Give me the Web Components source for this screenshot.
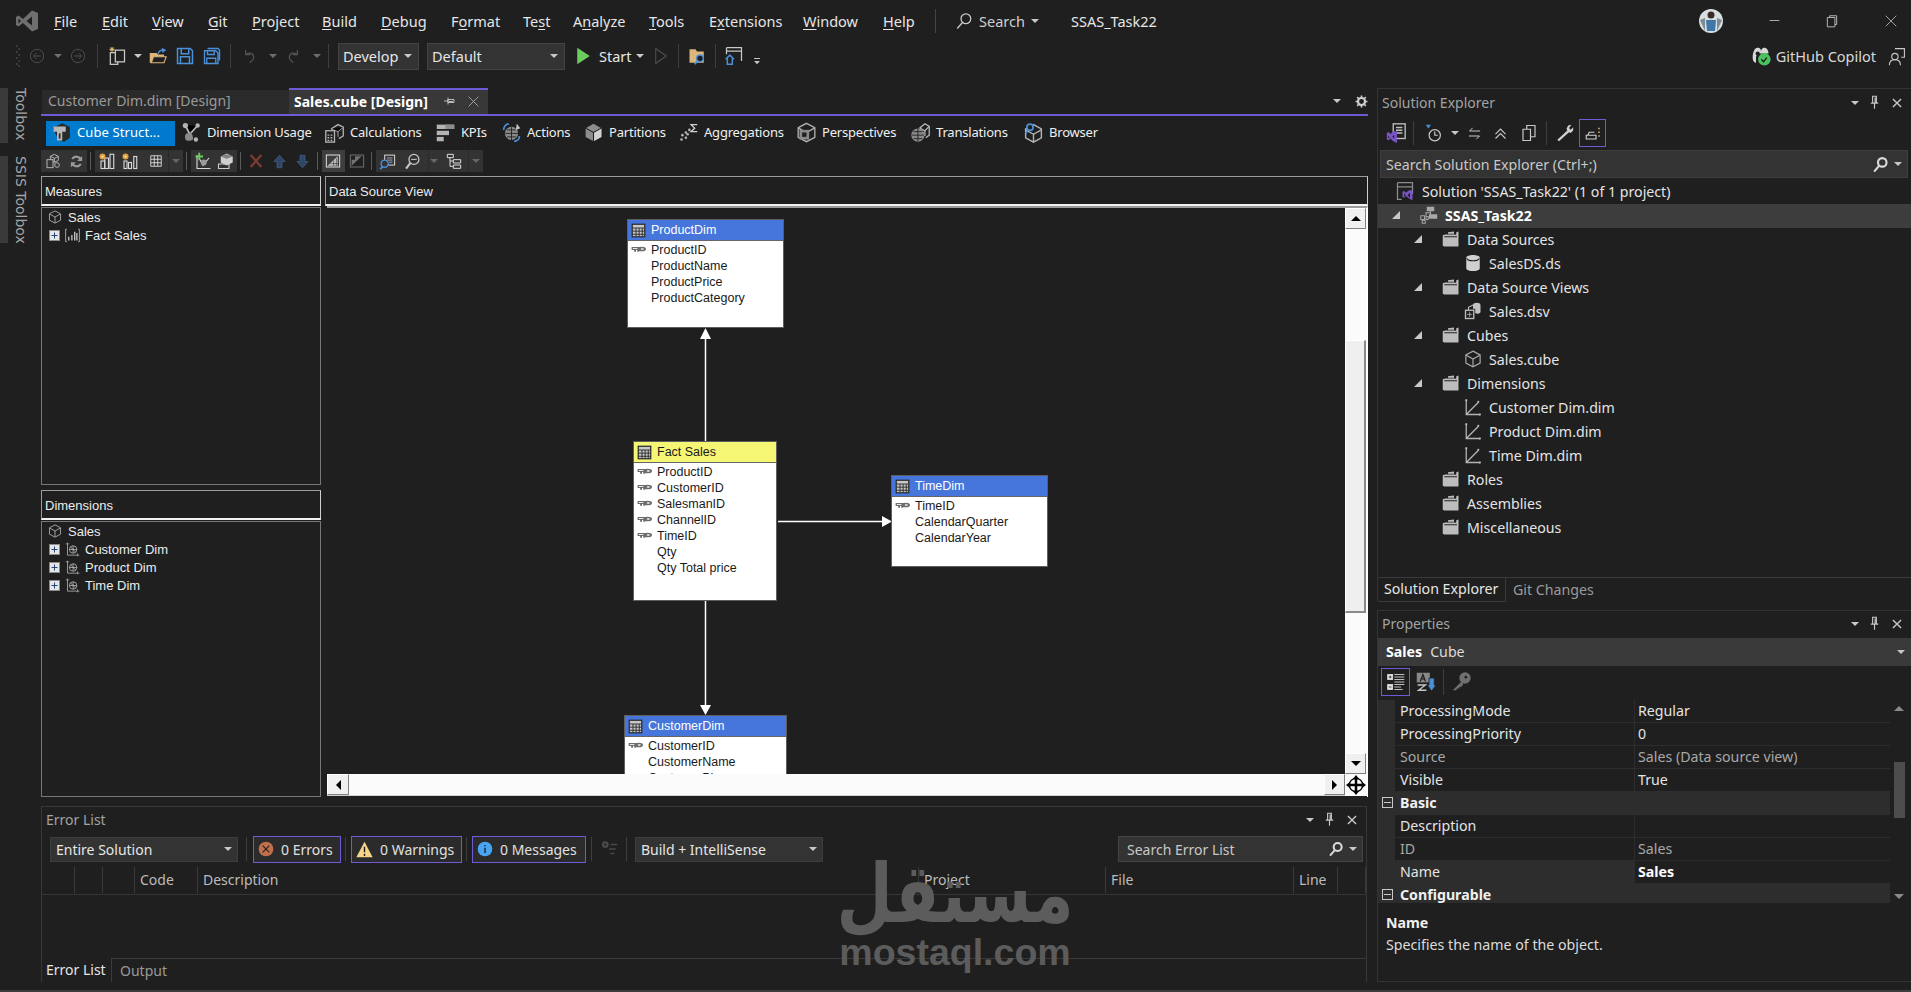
<!DOCTYPE html>
<html>
<head>
<meta charset="utf-8">
<title>SSAS_Task22</title>
<style>
html,body{margin:0;padding:0;background:#1f1f1f;width:1911px;height:992px;overflow:hidden}
</style>
</head>
<body>
<vs-app>
  <vs-titlebar slot="title"></vs-titlebar>
  <vs-mainbar slot="bar"></vs-mainbar>
  <side-strip slot="side"></side-strip>
  <doc-well slot="doc"></doc-well>
  <error-list slot="err"></error-list>
  <solution-pane slot="sol"></solution-pane>
  <props-pane slot="props"></props-pane>
  <water-mark slot="mark"></water-mark>
</vs-app>

<script>
// icons, all hand drawn on a 24 box
const G='#b4b4b4', D='#5e5e5e', B='#4a90d9';
const ICONS={
 vslogo:`<path fill="#6f6f6f" fill-rule="evenodd" d="M17 1.500 23 4v16l-6 2.500-9-8.500-4.500 3.500L1 16V8l2.500-1.500L8 10zM17 7.500 11.500 12l5.500 4.500zM3.500 9.500v5L6 12z"/>`,
 grip:`<g fill="#4c4c4c"><rect x="9" y="1" width="2" height="2"/><rect x="13" y="4" width="2" height="2"/><rect x="9" y="7" width="2" height="2"/><rect x="13" y="10" width="2" height="2"/><rect x="9" y="13" width="2" height="2"/><rect x="13" y="16" width="2" height="2"/><rect x="9" y="19" width="2" height="2"/><rect x="13" y="21" width="2" height="2"/></g>`,
 back:`<g fill="none" stroke="#4e4e4e" stroke-width="1.500"><circle cx="12" cy="12" r="10"/><path d="M18 12H7M11 7.500 6.500 12l4.500 4.500"/></g>`,
 fwd:`<g fill="none" stroke="#4e4e4e" stroke-width="1.500"><circle cx="12" cy="12" r="10"/><path d="M6 12h11M13 7.500l4.500 4.500-4.500 4.500"/></g>`,
 newproj:`<g fill="none" stroke="#c8c8c8" stroke-width="1.500"><rect x="4" y="8" width="9" height="14"/><rect x="10" y="5" width="11" height="14" fill="#1f1f1f"/></g><path d="M6 1v6M3 4h6M4 2l4 4M8 2 4 6" stroke="#e8c877" stroke-width="1.200"/>`,
 open:`<path fill="#dcb67a" d="M1 8h9l2 2h8v3H6l-3 8H1z"/><path fill="#1f1f1f" stroke="#dcb67a" stroke-width="1.500" d="M6 13h17l-3 8H3z"/><path d="M12 9c1-3 4-5 7-5" fill="none" stroke="#4a90d9" stroke-width="2"/><path fill="#4a90d9" d="M17 1l6 3-5 4z"/>`,
 save:`<path fill="none" stroke="#4a90d9" stroke-width="2" d="M2 2h17l3 3v17H2zM7 2v7h10V2M6 22v-9h12v9"/>`,
 saveall:`<path fill="none" stroke="#4a90d9" stroke-width="1.800" d="M2 5h15l3 3v14H2zM6 5v5h9V5M5 22v-7h12v7M6 2h14l2 2v14"/>`,
 undo:`<path fill="none" stroke="#555" stroke-width="1.800" d="M7 3v7h7M7 10c4-4 11-3 12 3 .5 4-3 7-6 9"/>`,
 redo:`<path fill="none" stroke="#555" stroke-width="1.800" d="M17 3v7h-7M17 10C13 6 6 7 5 13c-.5 4 3 7 6 9"/>`,
 play:`<path fill="#6ccb5f" d="M2 1l20 11L2 23z"/>`,
 playo:`<path fill="none" stroke="#555" stroke-width="1.500" d="M3 2l18 10-18 10z"/>`,
 foldersearch:`<path fill="#dcb67a" d="M2 3h8l2 3h9v15H2z"/><circle cx="16" cy="15" r="4.500" fill="#1f1f1f" stroke="#4a90d9" stroke-width="2"/><path d="M12.500 18.500 9 23" stroke="#4a90d9" stroke-width="2.500"/>`,
 winhome:`<path fill="none" stroke="#c8c8c8" stroke-width="1.500" d="M3 2h18v16M3 2v8M3 6h18"/><path fill="none" stroke="#4a90d9" stroke-width="1.800" d="M2 16l5-5 5 5M4 15v7h6v-7"/>`,
 overflow:`<path d="M5 6h14" stroke="#c8c8c8" stroke-width="2.500"/><path fill="#c8c8c8" d="M5 12h14l-7 8z"/>`,
 search:`<g fill="none" stroke="#c8c8c8" stroke-width="1.700"><circle cx="14.500" cy="9" r="6.500"/><path d="M10 14 3 22"/></g>`,
 searchb:`<g fill="none" stroke="#dcdcdc" stroke-width="3"><circle cx="14.500" cy="9" r="6"/><path d="M10 14 3 22"/></g>`,
 copilot:`<path fill="#d8d8d8" d="M2 14c0-6 2-12 6-12s4 3 4 5c0-2 1-5 4-5s5 3 5 7H9c-1 0-3 2-3 5v6c-2 0-4-2-4-6z"/><circle cx="8" cy="9" r="2.500" fill="#1f1f1f"/><circle cx="16" cy="16" r="7.500" fill="#4bc25f"/><path d="M12.500 16l2.500 3 4-5" fill="none" stroke="#111" stroke-width="1.500"/>`,
 person:`<g fill="none" stroke="#c8c8c8" stroke-width="1.400"><circle cx="10" cy="12" r="4"/><path d="M3 23c0-5 3-7 7-7s7 2 7 7M10 2h12v11h-4"/></g>`,
 avatar:`<circle cx="12" cy="12" r="12" fill="#d8dde0"/><circle cx="12" cy="6" r="3.500" fill="#3a2c24"/><path fill="#3f78a8" d="M7 11h10l-1 11H8z"/><path fill="#7d8b93" d="M1 11l5-2v13zM23 11l-5-2v13z"/>`,
 pin:`<path fill="none" stroke="#c8c8c8" stroke-width="1.800" d="M9 2h6v11H9zM6 13h12M12 13v9M13 4v8"/>`,
 pinside:`<path fill="none" stroke="#c8c8c8" stroke-width="1.800" d="M22 9v6H10V9zM10 5v14M10 12H2M12 13h8"/>`,
 x:`<path d="M5 5l14 14M19 5 5 19" stroke="#c8c8c8" stroke-width="2.400" fill="none"/>`,
 xthin:`<path d="M3 3l18 18M21 3 3 21" stroke="#c8c8c8" stroke-width="1.300" fill="none"/>`,
 min:`<path d="M3 12h18" stroke="#c8c8c8" stroke-width="1.500"/>`,
 restore:`<path d="M8 6V3h12v15h-3M4 6h13v16H4z" stroke="#c8c8c8" stroke-width="1.500" fill="none"/>`,
 gear:`<circle cx="12" cy="12" r="6.500" fill="none" stroke="#d0d0d0" stroke-width="4"/><path d="M12 1v4M12 19v4M1 12h4M19 12h4M4 4l3 3M17 17l3 3M20 4l-3 3M7 17l-3 3" stroke="#d0d0d0" stroke-width="3"/>`,
 cube:`<g fill="none" stroke="#a8a8a8" stroke-width="1.600"><path d="M12 1.500l9.500 5v11l-9.500 5-9.500-5v-11z"/><path d="M3 7l9 5 9-5M12 12v10"/></g>`,
 cstruct:`<path fill="#2a2a2a" stroke="#222" d="M4 7l10-5 8 4v12l-6 4-6-2z"/><path fill="#b8b8b8" d="M4 5h14v6h-4v10H8V11H4z"/><path fill="#2a2a2a" d="M10 13h2v6h-2z"/>`,
 dimusage:`<g stroke="${G}" stroke-width="2"><path d="M5 4l5 10 9-10M10 14l3 6"/></g><circle cx="5" cy="4" r="3" fill="${G}"/><circle cx="19" cy="4" r="2.500" fill="${G}"/><circle cx="9" cy="17" r="4.500" fill="#8a8a8a"/><circle cx="17" cy="20" r="2.500" fill="${G}"/>`,
 calc:`<path fill="none" stroke="${G}" stroke-width="1.500" d="M8 8l8-5 6 3v10l-5 3"/><path stroke="${G}" d="M8 8l8 3 6-5M16 11v6"/><rect x="2" y="10" width="10" height="13" fill="#1f1f1f" stroke="${G}" stroke-width="1.500"/><path stroke="${G}" stroke-width="1.500" stroke-dasharray="2 1.500" d="M4 15h6M4 18h6M4 21h6"/>`,
 kpi:`<g fill="${G}"><rect x="2" y="3" width="20" height="5"/><rect x="2" y="10" width="14" height="5"/><rect x="2" y="17" width="8" height="5"/></g><rect x="12" y="3" width="10" height="5" fill="#8c8c8c"/>`,
 actions:`<circle cx="12" cy="13" r="7.500" fill="#8a8a8a"/><path d="M12 6v15M5 13h15M7 9h10M7 17h10" stroke="#1f1f1f"/><path d="M3 9c0-4 3-7 6-7M21 16c0 4-3 6-6 6" fill="none" stroke="${B}" stroke-width="2"/><path d="M18 2l4 5-5 2z" fill="#c8c8c8"/>`,
 partitions:`<path fill="#8e8e8e" d="M12 2l9 5v10l-9 5-9-5V7z"/><path fill="#d2d2d2" d="M12 12l9-5v10l-9 5z"/><path d="M3 7l9 5 9-5M12 12v10" fill="none" stroke="#1f1f1f" stroke-width="1.200"/>`,
 aggs:`<g fill="${G}"><circle cx="4" cy="20" r="1.500"/><circle cx="5" cy="15" r="1.500"/><circle cx="9" cy="18" r="1.500"/><circle cx="9" cy="12" r="1.500"/><circle cx="13" cy="9" r="1.500"/><circle cx="11" cy="14" r="1.500"/></g><path d="M22 3h-7l4 4-4 4h7" fill="none" stroke="#d0d0d0" stroke-width="1.600"/>`,
 persp:`<g fill="none" stroke="${G}" stroke-width="1.500"><path d="M12 1.500l9.500 5v11l-9.500 5-9.500-5v-11z"/><path d="M3 7l9 5 9-5"/></g><rect x="4" y="9" width="11" height="11" fill="#8a8a8a"/><rect x="7" y="12" width="5" height="5" fill="#1f1f1f"/>`,
 trans:`<g fill="none" stroke="${G}" stroke-width="1.500"><path d="M11 7l6-5 5 3v10l-4 3"/><path d="M11 7l6 3 5-5M17 10v6"/></g><circle cx="9" cy="15" r="7.500" fill="#8a8a8a"/><path d="M9 8v14M2 15h14M4 11h10M4 19h10" stroke="#1f1f1f"/>`,
 browser:`<g fill="none" stroke="${G}" stroke-width="1.600"><path d="M12 3l9 5v10l-9 5-9-5V8z"/><path d="M3 9l9 5 9-5M12 14v9"/></g><circle cx="8" cy="6" r="3.500" fill="#1f1f1f" stroke="${B}" stroke-width="2"/><path d="M6 9l-3 4" stroke="${B}" stroke-width="2"/>`,
 t_addm:`<g fill="none" stroke="${G}" stroke-width="1.500"><path d="M8 5l6-3 6 3v6l-6 3-6-3z"/><path d="M8 5l6 3 6-3M14 8v6"/></g><rect x="3" y="10" width="9" height="12" fill="#333" stroke="${G}" stroke-width="1.500"/><circle cx="18" cy="18" r="3.500" fill="none" stroke="${G}" stroke-width="1.500"/>`,
 t_ref:`<path fill="none" stroke="#9a9a9a" stroke-width="3.500" d="M19 9A8 8 0 0 0 5 8M5 15a8 8 0 0 0 14 1"/><path fill="#9a9a9a" d="M21 3v8h-8zM3 21v-8h8z"/>`,
 t_bars:`<g fill="none" stroke="#d8d8d8" stroke-width="1.500"><rect x="4" y="12" width="5" height="10"/><rect x="9" y="8" width="5" height="14"/><rect x="16" y="3" width="5" height="19"/></g><circle cx="6" cy="6" r="4" fill="#e0a040"/><circle cx="6" cy="6" r="1.500" fill="#f3e3b0"/>`,
 t_bars2:`<g fill="none" stroke="#d8d8d8" stroke-width="1.500"><rect x="4" y="12" width="4" height="10"/><rect x="10" y="14" width="4" height="8"/><rect x="17" y="6" width="4" height="16"/></g><circle cx="6" cy="6" r="4" fill="#e0a040"/><circle cx="6" cy="6" r="1.500" fill="#f3e3b0"/>`,
 t_grid:`<path fill="none" stroke="#e0e0e0" stroke-width="1.500" d="M3 3h18v18H3zM9 3v18M15 3v18M3 9h18M3 15h18"/>`,
 t_addd:`<path fill="none" stroke="#d8d8d8" stroke-width="1.500" d="M4 4v18h18M8 10l4 8 8-10"/><path d="M7 1v10M2 6h10" stroke="#6ccb5f" stroke-width="2.500"/><circle cx="13" cy="14" r="4" fill="#9a9a9a"/>`,
 t_cubeedit:`<path fill="#d0d0d0" d="M13 2l8 4v8l-8 4-8-4V6z"/><path fill="#333" d="M13 9l8-3-8-3-8 3z" opacity=".5"/><path fill="none" stroke="#d0d0d0" stroke-width="1.500" d="M2 16h14v6H2z"/>`,
 t_x:`<path d="M4 3l16 18M20 3 4 21" stroke="#7c3a32" stroke-width="3.500"/>`,
 t_up:`<path fill="#2f4566" stroke="#466893" d="M12 2l9 10h-5v10H8V12H3z"/>`,
 t_dn:`<path fill="#2f4566" stroke="#466893" d="M12 22l9-10h-5V2H8v10H3z"/>`,
 t_split:`<rect x="2" y="3" width="20" height="18" fill="none" stroke="#e0e0e0" stroke-width="1.500"/><path d="M4 19 19 5v14z" fill="#e0e0e0" opacity=".85"/><path d="M8 16h12M13 11v8M17 8v11" stroke="#333"/>`,
 t_split2:`<rect x="2" y="3" width="20" height="18" fill="none" stroke="#707070" stroke-width="1.500"/><path d="M4 19 19 5H9v5H4z" fill="#707070"/>`,
 t_find:`<rect x="8" y="3" width="14" height="14" fill="#333" stroke="#d0d0d0" stroke-width="1.500"/><path d="M11 7h8M11 10h8M14 13h5" stroke="#d0d0d0"/><circle cx="8" cy="15" r="5" fill="#333" stroke="${B}" stroke-width="2"/><path d="M5 19l-3 4" stroke="${B}" stroke-width="2.500"/>`,
 t_zoom:`<circle cx="14" cy="9" r="7" fill="#333" stroke="#c8c8c8" stroke-width="1.800"/><path d="M10 9h8" stroke="#c8c8c8" stroke-width="1.500"/><path d="M9 14l-6 8" stroke="#c8c8c8" stroke-width="3"/>`,
 t_tree:`<path fill="none" stroke="#dcdcdc" stroke-width="1.500" d="M2 2h9v5H2zM11 10h11v5H11zM11 18h11v5H11zM6 7v13h5M6 12h5"/>`,
 folder:`<path fill="#bdbdbd" d="M1 7l3-1h15V3l3-1v20H3l-2-1z"/><path fill="none" stroke="#1f1f1f" stroke-width="1.300" d="M3 9h17M9 3h9v3"/><path fill="#bdbdbd" d="M8 3l8-1v3H8z" />`,
 db:`<path fill="#d0d0d0" d="M3 5c0-5 18-5 18 0v14c0 5-18 5-18 0z"/><path fill="none" stroke="#1f1f1f" stroke-width="1.400" d="M3.500 6c2 4 15 4 17 0"/>`,
 dsv:`<path fill="#c4c4c4" d="M12 4c0-4 10-4 10 0v9c0 3-5 3-7 2V9h-3z"/><rect x="2" y="11" width="11" height="11" fill="#1f1f1f" stroke="#bdbdbd" stroke-width="1.800"/><path d="M7.500 13v7M4 16.500h7" stroke="#bdbdbd"/><path fill="none" stroke="#bdbdbd" stroke-width="1.500" d="M6 11V7l6-3"/>`,
 dim:`<g fill="none" stroke="#b4b4b4" stroke-width="1.700"><path d="M3 2v20h19M3 22 19 6"/></g><circle cx="3" cy="3" r="1.500" fill="#b4b4b4"/><circle cx="21" cy="22" r="1.500" fill="#b4b4b4"/><circle cx="19" cy="5" r="1.500" fill="#b4b4b4"/>`,
 project:`<g fill="#a8a8a8"><rect x="9" y="1" width="10" height="6"/><rect x="12" y="11" width="11" height="6"/></g><path d="M14 7v6M14 9h-6v4" stroke="#a8a8a8" stroke-width="1.500" fill="none"/><g fill="none" stroke="#a8a8a8" stroke-width="1.300"><rect x="1" y="13" width="5" height="5"/><rect x="3" y="19" width="4" height="4"/><rect x="8" y="14" width="3" height="4"/></g>`,
 solution:`<path fill="none" stroke="#8c8c8c" stroke-width="1.500" d="M3 2h18v14M3 2v20h5M3 7h18"/><path fill="#7a55c7" d="M21 11v12l-4-2-4-3-2 2-2-1v-6l2-1 2 2 4-3z"/><path fill="#1f1f1f" d="M18 14l-3 3 3 3zM11 15v4l2-2z"/>`,
 vsproj:`<rect x="9" y="2" width="13" height="16" fill="none" stroke="#bdbdbd" stroke-width="1.500"/><path d="M12 6h7M12 9h7M12 12h7" stroke="#bdbdbd" stroke-width="1.500"/><path fill="#7a55c7" d="M13 10v13l-4-2-3-3-2 2-2-1V12l2-1 2 2 3-3z"/><path fill="#1f1f1f" d="M10 14l-2 2 2 2zM3.500 15v3l1.500-1.500z"/>`,
 history:`<circle cx="13" cy="15" r="7.500" fill="none" stroke="#c8c8c8" stroke-width="1.600"/><path d="M13 10v5h4" fill="none" stroke="#c8c8c8" stroke-width="1.600"/><path fill="#4a90d9" d="M1 1h7L4.500 6z"/>`,
 sync:`<path fill="none" stroke="#c8c8c8" stroke-width="1.600" d="M21 8H4l5-5M3 16h17l-5 5"/>`,
 collapse:`<path fill="none" stroke="#c8c8c8" stroke-width="1.800" d="M4 13l8-8 8 8M4 20l8-8 8 8"/>`,
 copies:`<path fill="none" stroke="#c8c8c8" stroke-width="1.600" d="M4 7h10v15H4zM9 7V2h11v15h-6"/>`,
 wrench:`<path fill="#d0d0d0" d="M21 2l-4 1-2 4 1 2-12 11 2 2L18 11l2 1 3-3 0-4-3 3-2-2z"/>`,
 preview:`<path fill="none" stroke="#d0d0d0" stroke-width="1.500" d="M3 15h13v5H3zM5 15l2-4h7"/><path stroke="#dcb67a" stroke-width="2" stroke-dasharray="2 3" d="M20 5v14"/>`,
 p_cat:`<g fill="none" stroke="#e0e0e0"><rect x="2" y="3" width="6" height="6" fill="#e0e0e0"/><rect x="2" y="15" width="6" height="6" fill="#e0e0e0"/><path d="M10 3h12M10 6h12M10 9h12M10 12h12M10 15h12M10 18h8M10 21h10"/></g><path d="M3.500 6h3M5 4.500v3M3.500 18h3" stroke="#1f1f1f"/>`,
 p_az:`<rect x="2" y="2" width="15" height="11" fill="#888"/><path d="M6 12l3-8 3 8M7 9h4" fill="none" stroke="#1f1f1f" stroke-width="1.400"/><path d="M3 16h9l-8 6h9" fill="none" stroke="#c8c8c8" stroke-width="1.500"/><path d="M16 8h6v8h2l-5 7-5-7h2z" fill="#4a90d9" stroke="#222"/>`,
 p_key:`<circle cx="16" cy="8" r="6.500" fill="#6f6f6f"/><path d="M12 12 2 22v0h4l1-2h2l1-2h2l2-3z" fill="#6f6f6f"/><circle cx="17" cy="7" r="1.500" fill="#1f1f1f"/>`,
 plusbox:`<rect x=".5" y=".5" width="10" height="10" fill="#e6e6e6" stroke="#8a8a8a"/><path d="M2.500 5.500h6M5.500 2.500v6" stroke="#24457a"/>`,
 bars:`<path fill="none" stroke="#c0c0c0" stroke-width="1.300" d="M3 2H1v20h2M21 2h2v20h-2"/><path d="M6 14v6M11 11v9M15.500 6v14M19 8v12" stroke="#c0c0c0" stroke-width="2.200"/>`,
 dimbox:`<g fill="none" stroke="#b4b4b4" stroke-width="1.300"><path d="M4 1v20h19"/><circle cx="13" cy="12" r="6"/><path d="M7 12h12M13 6v12M9 8l8 8"/></g><path d="M1 3h6M20 18v5" stroke="#b4b4b4"/>`,
 tbl:`<rect x="1" y="1" width="22" height="22" fill="#2b2b2b"/><path d="M3 3h18v18H3z" fill="#c8c8c8"/><path d="M3 8h18M3 13h18M3 18h18M8 8v13M13 8v13M18 8v13" stroke="#2b2b2b" stroke-width="1.500"/>`,
 key:`<path d="M1 6h14v9h-2v5h-3v-5H8v5H5v-5H1z" fill="#6e6e6e"/><path d="M3 9.500h11v2.500H3z" fill="#fff"/><circle cx="17" cy="12" r="7" fill="#6e6e6e"/><circle cx="18" cy="12" r="2.500" fill="#fff"/>`,
 err:`<circle cx="12" cy="12" r="11" fill="#c0704a"/><path d="M7 7l10 10M17 7 7 17" stroke="#1f1f1f" stroke-width="1.600"/>`,
 warn:`<path fill="#f7d488" d="M12 1 23.500 23H.5z"/><path d="M12 8v8M12 18v3" stroke="#1f1f1f" stroke-width="2"/>`,
 info:`<circle cx="12" cy="12" r="11" fill="#4aa3f0"/><path d="M12 10v8M12 6v2" stroke="#102030" stroke-width="2"/>`,
 filter:`<circle cx="7" cy="6" r="4.500" fill="#4a4a4a"/><path d="M14 6h9M12 12h9M14 18h5" stroke="#4a4a4a" stroke-width="2"/><circle cx="7" cy="6" r="1.500" fill="#1f1f1f"/>`,
 crosshair:`<path fill="#000" d="M12 0l4 5h-2.500v5.500H19V8l5 4-5 4v-2.500h-5.500V19H16l-4 5-4-5h2.500v-5.500H5V16l-5-4 5-4v2.500h5.500V5H8z"/><circle cx="12" cy="12" r="8" fill="none" stroke="#000" stroke-width="1.500"/>`,
};

class VsIcon extends HTMLElement{
  constructor(){super();this.attachShadow({mode:'open'});}
  connectedCallback(){
    const s=this.getAttribute('s')||18, w=this.getAttribute('w')||s;
    this.shadowRoot.innerHTML=`<style>:host{display:inline-flex;flex:none;width:${w}px;height:${s}px}svg{display:block;width:100%;height:100%}</style>
    <svg viewBox="0 0 24 24" preserveAspectRatio="none">${ICONS[this.getAttribute('n')]||''}</svg>`;
  }
}
customElements.define('vs-icon',VsIcon);

// small triangle used for every dropdown
class VsCaret extends HTMLElement{
  constructor(){
    super();this.attachShadow({mode:'open'});
    this.shadowRoot.innerHTML=`<style>:host{display:inline-block;flex:none;width:0;height:0;border-left:4px solid transparent;border-right:4px solid transparent;border-top:4px solid var(--c,#c8c8c8)}</style>`;
  }
}
customElements.define('vs-caret',VsCaret);

function comp(tag,html){
  const t=document.createElement('template');
  t.innerHTML=html;
  customElements.define(tag,class extends HTMLElement{
    constructor(){super();this.attachShadow({mode:'open'});this.shadowRoot.appendChild(t.content.cloneNode(true));}
  });
}

comp('vs-app',`<style>
:host{display:grid;width:1911px;height:992px;position:relative;overflow:hidden;background:#1f1f1f;color:#dcdcdc;
  font-family:"Noto Sans","Liberation Sans",sans-serif;font-size:14px;
  grid-template-columns:41px 1329px 7px 534px;grid-template-rows:41px 33px 14px 709px 9px 176px 8px 1fr}
::slotted([slot=title]),::slotted([slot=bar]){grid-column:1/-1}
::slotted([slot=title]){grid-row:1}
::slotted([slot=bar]){grid-row:2}
::slotted([slot=side]){grid-column:1;grid-row:4/7}
::slotted([slot=doc]){grid-column:2;grid-row:4}
::slotted([slot=err]){grid-column:2;grid-row:6}
.right{grid-column:4;grid-row:4/7;display:grid;grid-template-rows:513px 9px 372px}
.foot{grid-column:1/-1;grid-row:8;background:#3d3d3d}
</style>
<slot name="title"></slot><slot name="bar"></slot><slot name="side"></slot><slot name="doc"></slot><slot name="err"></slot>
<div class="right"><slot name="sol"></slot><div></div><slot name="props"></slot></div>
<div class="foot"></div>
<slot name="mark"></slot>`);

comp('vs-titlebar',`<style>
:host{display:flex;align-items:center;height:41px;font-size:14.500px;color:#e6e6e6;padding:0 0 0 15px;box-sizing:border-box}
.m{flex:none}
u{text-underline-offset:2px}
.sep{width:1px;height:24px;background:#444;margin:0 15px 0 0}
.s{display:flex;align-items:center;gap:6px;width:116px;margin-left:4px;color:#cfcfcf}
.tt{flex:1}
.w{width:58px;display:flex;justify-content:center}
</style>
<vs-icon n="vslogo" s="24" style="margin-right:15px"></vs-icon>
<span class="m" style="width:48px"><u>F</u>ile</span><span class="m" style="width:50px"><u>E</u>dit</span><span class="m" style="width:56px"><u>V</u>iew</span><span class="m" style="width:44px"><u>G</u>it</span><span class="m" style="width:70px"><u>P</u>roject</span><span class="m" style="width:59px"><u>B</u>uild</span><span class="m" style="width:70px"><u>D</u>ebug</span><span class="m" style="width:72px">F<u>o</u>rmat</span><span class="m" style="width:50px">Te<u>s</u>t</span><span class="m" style="width:76px">A<u>n</u>alyze</span><span class="m" style="width:60px"><u>T</u>ools</span><span class="m" style="width:94px">E<u>x</u>tensions</span><span class="m" style="width:80px"><u>W</u>indow</span><span class="m" style="width:52px"><u>H</u>elp</span>
<span class="sep"></span>
<span class="s"><vs-icon n="search" s="18"></vs-icon>Search<vs-caret></vs-caret></span>
<span class="tt">SSAS_Task22</span>
<vs-icon n="avatar" s="24" style="margin-right:22px"></vs-icon>
<span class="w"><vs-icon n="min" s="13"></vs-icon></span><span class="w"><vs-icon n="restore" s="14"></vs-icon></span><span class="w" style="width:40px;margin-left:10px"><vs-icon n="xthin" s="14"></vs-icon></span>`);

comp('vs-mainbar',`<style>
:host{display:flex;align-items:center;height:33px;padding-bottom:3px;box-sizing:border-box;font-size:14.500px;color:#e6e6e6;--c:#6e6e6e}
.sep{width:1px;height:24px;background:#3e3e3e;flex:none}
.combo{flex:none;box-sizing:border-box;height:27px;display:flex;align-items:center;justify-content:space-between;background:#333;border:1px solid #434343;padding:0 6px 0 4px}
.g{margin-left:auto;display:flex;align-items:center;gap:5px;color:#d8d8d8}
</style>
<vs-icon n="grip" s="24" w="14" style="margin-left:11px"></vs-icon>
<vs-icon n="back" s="16" style="margin-left:4px"></vs-icon><vs-caret style="margin-left:9px"></vs-caret>
<vs-icon n="fwd" s="16" style="margin-left:8px"></vs-icon>
<span class="sep" style="margin-left:11px"></span>
<vs-icon n="newproj" s="20" style="margin-left:9px"></vs-icon><vs-caret style="margin-left:7px;--c:#c8c8c8"></vs-caret>
<vs-icon n="open" s="18" style="margin-left:7px"></vs-icon>
<vs-icon n="save" s="18" style="margin-left:9px"></vs-icon>
<vs-icon n="saveall" s="18" style="margin-left:9px"></vs-icon>
<span class="sep" style="margin-left:9px"></span>
<vs-icon n="undo" s="16" style="margin-left:10px"></vs-icon><vs-caret style="margin-left:12px"></vs-caret>
<vs-icon n="redo" s="16" style="margin-left:9px"></vs-icon><vs-caret style="margin-left:11px"></vs-caret>
<span class="sep" style="margin-left:7px"></span>
<span class="combo" style="width:81px;margin-left:9px">Develop<vs-caret style="--c:#c8c8c8"></vs-caret></span>
<span class="combo" style="width:138px;margin-left:8px">Default<vs-caret style="--c:#c8c8c8"></vs-caret></span>
<vs-icon n="play" s="18" w="15" style="margin-left:11px"></vs-icon>
<span style="margin-left:8px;width:37px">Start</span><vs-caret style="--c:#c8c8c8"></vs-caret>
<vs-icon n="playo" s="18" w="14" style="margin-left:10px"></vs-icon>
<span class="sep" style="margin-left:10px"></span>
<vs-icon n="foldersearch" s="18" style="margin-left:9px"></vs-icon>
<span class="sep" style="margin-left:9px"></span>
<vs-icon n="winhome" s="20" style="margin-left:8px"></vs-icon>
<vs-icon n="overflow" s="10" style="margin-left:8px;margin-top:9px"></vs-icon>
<span class="g"><vs-icon n="copilot" s="20"></vs-icon><span style="margin-right:6px">GitHub Copilot</span><vs-icon n="person" s="19" style="margin-right:5px"></vs-icon></span>`);

comp('side-strip',`<style>
:host{display:flex;flex-direction:column;gap:13px;color:#a6a6a6;font-family:"DejaVu Sans",sans-serif}
span{writing-mode:vertical-rl;border-left:8px solid #3a3a3a;padding-left:5px;width:max-content;font-size:14px}
</style>
<span style="padding-bottom:2px">Toolbox</span><span>SSIS Toolbox</span>`);

comp('doc-well',`<style>
:host{display:grid;grid-template-rows:26px 2px 34px 22px 4px 1fr;min-height:0;width:1327px}
.tabs{display:flex;align-items:stretch}
.t1{width:247px;margin-left:1px;background:#2a2a2a;color:#9a9a9a;padding-left:6px;box-sizing:border-box;margin-top:2px;line-height:22px}
.t2{width:199px;background:#383838;color:#fff;border-top:2px solid #6b5bd6;box-sizing:border-box;display:flex;align-items:center;padding:0 0 2px 5px;font-size:14px;font-weight:700}
.ctl{margin-left:auto;display:flex;align-items:center;gap:14px;padding-right:0}
.line{background:#6b5bd6}
.sub{display:flex;align-items:center;padding-left:5px}
.bar{display:flex;align-items:stretch;height:22px}
.panes{display:grid;grid-template-columns:280px 1043px;gap:4px;min-height:0}
.lft{display:grid;grid-template-rows:309px 307px;gap:5px;min-height:0}
</style>
<div class="tabs">
 <div class="t1">Customer Dim.dim [Design]</div>
 <div class="t2">Sales.cube [Design]<vs-icon n="pinside" s="12" style="margin-left:15px"></vs-icon><vs-icon n="xthin" s="13" style="margin-left:12px"></vs-icon></div>
 <div class="ctl"><vs-caret></vs-caret><vs-icon n="gear" s="13"></vs-icon></div>
</div>
<div class="line"></div>
<div class="sub">
 <cube-tab i="cstruct" w="129" on>Cube Struct...</cube-tab>
 <span style="width:5px"></span>
 <cube-tab i="dimusage" w="143">Dimension Usage</cube-tab>
 <cube-tab i="calc" w="111">Calculations</cube-tab>
 <cube-tab i="kpi" w="66">KPIs</cube-tab>
 <cube-tab i="actions" w="82">Actions</cube-tab>
 <cube-tab i="partitions" w="95">Partitions</cube-tab>
 <cube-tab i="aggs" w="118">Aggregations</cube-tab>
 <cube-tab i="persp" w="114">Perspectives</cube-tab>
 <cube-tab i="trans" w="113">Translations</cube-tab>
 <cube-tab i="browser" w="100">Browser</cube-tab>
</div>
<cube-tools class="bar"></cube-tools>
<div></div>
<div class="panes">
 <div class="lft">
  <list-pane h="Measures">
   <list-row i="cube" top>Sales</list-row>
   <list-row i="bars">Fact Sales</list-row>
  </list-pane>
  <list-pane h="Dimensions">
   <list-row i="cube" top>Sales</list-row>
   <list-row i="dimbox">Customer Dim</list-row>
   <list-row i="dimbox">Product Dim</list-row>
   <list-row i="dimbox">Time Dim</list-row>
  </list-pane>
 </div>
 <dsv-pane></dsv-pane>
</div>`);

class CubeTab extends HTMLElement{
  constructor(){super();this.attachShadow({mode:'open'});}
  connectedCallback(){
    const on=this.hasAttribute('on');
    this.shadowRoot.innerHTML=`<style>
    :host{display:flex;align-items:center;flex:none;box-sizing:border-box;height:25px;padding-bottom:2px;width:${this.getAttribute('w')}px;font-size:13px;letter-spacing:-.2px;color:#f0f0f0;padding-left:${on?4:1}px;gap:${on?6:5}px;${on?'background:#007acc;color:#fff;letter-spacing:.1px;':''}}
    </style><vs-icon n="${this.getAttribute('i')}" s="21"></vs-icon><slot></slot>`;
  }
}
customElements.define('cube-tab',CubeTab);

comp('cube-tools',`<style>
:host{display:flex;align-items:stretch}
.seg{background:#333;display:flex;align-items:center;box-sizing:border-box;flex:none}
.sep{width:1px;height:18px;background:#5a5a5a;align-self:center;flex:none}
.ic{width:23.500px;display:flex;justify-content:center;flex:none}
.dd{width:20px;display:flex;justify-content:center;border-left:1px solid #2a2a2a;align-self:stretch;align-items:center;--c:#666}
</style>
<span class="seg" style="width:46px">
 <span class="ic"><vs-icon n="t_addm" s="16"></vs-icon></span><span class="ic"><vs-icon n="t_ref" s="15"></vs-icon></span>
</span>
<span class="sep" style="margin:0 4px 0 3px"></span>
<span class="seg" style="width:88px">
 <span class="ic"><vs-icon n="t_bars" s="18"></vs-icon></span><span class="ic"><vs-icon n="t_bars2" s="18"></vs-icon></span><span class="ic" style="margin-left:2px"><vs-icon n="t_grid" s="14"></vs-icon></span><span class="dd" style="margin-left:auto"><vs-caret></vs-caret></span>
</span>
<span class="sep" style="margin:0 4px 0 3px"></span>
<span class="seg" style="width:46px">
 <span class="ic"><vs-icon n="t_addd" s="18"></vs-icon></span><span class="ic"><vs-icon n="t_cubeedit" s="18"></vs-icon></span>
</span>
<span class="sep" style="margin:0 3px 0 3px"></span>
<span class="ic" style="align-items:center"><vs-icon n="t_x" s="16"></vs-icon></span><span class="ic" style="align-items:center"><vs-icon n="t_up" s="15"></vs-icon></span><span class="ic" style="align-items:center"><vs-icon n="t_dn" s="15"></vs-icon></span>
<span class="sep" style="margin:0 4px 0 2px"></span>
<span class="seg" style="width:23px;background:#3e3e3e;justify-content:center"><vs-icon n="t_split" s="16"></vs-icon></span>
<span class="ic" style="align-items:center;width:24px"><vs-icon n="t_split2" s="16"></vs-icon></span>
<span class="sep" style="margin:0 4px 0 2px"></span>
<span class="seg" style="width:107px">
 <span class="ic"><vs-icon n="t_find" s="17"></vs-icon></span><span class="ic" style="margin-left:2px"><vs-icon n="t_zoom" s="17"></vs-icon></span><span class="dd" style="width:12px;margin-left:3px"><vs-caret></vs-caret></span><span class="ic" style="width:28px"><vs-icon n="t_tree" s="16"></vs-icon></span><span class="dd" style="width:14px"><vs-caret></vs-caret></span>
</span>`);

class ListPane extends HTMLElement{
  constructor(){super();this.attachShadow({mode:'open'});}
  connectedCallback(){
    this.shadowRoot.innerHTML=`<style>
    :host{display:flex;flex-direction:column;min-height:0;font-family:"Liberation Sans",sans-serif;font-size:13px;color:#ececec;box-sizing:border-box}
    .h{height:30px;flex:none;box-sizing:border-box;border:1px solid #cfcfcf;border-top-color:#9c9c9c;border-left-color:#9c9c9c;border-bottom:2px solid #f2f2f2;padding:2px 0 0 3px;display:flex;align-items:center}
    .b{flex:1;border:1px solid #777;box-sizing:border-box;padding:0 0 0 6px;margin-top:1px}
    </style><div class="h">${this.getAttribute('h')}</div><div class="b"><slot></slot></div>`;
  }
}
customElements.define('list-pane',ListPane);

class ListRow extends HTMLElement{
  constructor(){super();this.attachShadow({mode:'open'});}
  connectedCallback(){
    const top=this.hasAttribute('top');
    this.shadowRoot.innerHTML=`<style>
    :host{display:flex;align-items:center;height:18px;gap:4px}
    .p{width:11px;height:11px;margin-left:1px;margin-right:1px}
    svg{display:block}
    </style>${top?'':'<svg class="p" viewBox="0 0 11 11">'+ICONS.plusbox+'</svg>'}
    <vs-icon n="${this.getAttribute('i')}" s="${top?14:15}" style="margin-right:${top?2:1}px"></vs-icon><slot></slot>`;
  }
}
customElements.define('list-row',ListRow);

comp('dsv-pane',`<style>
:host{display:grid;grid-template-rows:30px 1fr;min-height:0;font-family:"Liberation Sans",sans-serif;font-size:13px;color:#ececec}
.h{box-sizing:border-box;border:1px solid #cfcfcf;border-top-color:#9c9c9c;border-left-color:#9c9c9c;border-bottom:2px solid #f2f2f2;padding:2px 0 0 3px;display:flex;align-items:center}
.f{display:grid;grid-template-columns:1018px 22px;grid-template-rows:566px 22px;margin-left:2px;border-top:2px solid #9a9a9a;min-height:0;border-right:1px solid #fff}
.c{position:relative;overflow:hidden;background:#1f1f1f}
.dith{background:#fbfbfb}
.v{display:flex;flex-direction:column}
.h2{display:flex;background:#fbfbfb;border-bottom:1px solid #d0d0d0}
.btn{flex:none;box-sizing:border-box;width:21px;height:21px;background:#f0f0f0;border:1px solid #fff;border-right-color:#808080;border-bottom-color:#808080;display:flex;align-items:center;justify-content:center}
.thumb{flex:none;height:273px;width:21px;box-sizing:border-box;background:#efefef;border:1px solid #fff;border-right:2px solid #8a8a8a;border-bottom:2px solid #8a8a8a}
.sp{flex:1}
.corner{background:#fbfbfb;display:flex;align-items:center;justify-content:center}
i{display:block;width:0;height:0;border:5px solid transparent}
svg.ar{position:absolute;left:0;top:0}
</style>
<div class="h">Data Source View</div>
<div class="f">
 <div class="c">
  <svg class="ar" width="1018" height="566" viewBox="0 0 1018 566">
   <g stroke="#fff" stroke-width="1.500" fill="#fff">
    <path d="M378.500 233V126"/><path d="M373 131h11l-5.500-11z" stroke="none"/>
    <path d="M378.500 393v108"/><path d="M373 497h11l-5.500 10z" stroke="none"/>
    <path d="M451 313.500h104"/><path d="M555 308v11l10-5.500z" stroke="none"/>
   </g>
  </svg>
  <dsv-table name="ProductDim" style="left:300px;top:11px;width:157px;height:109px">
   <dsv-col key>ProductID</dsv-col><dsv-col>ProductName</dsv-col><dsv-col>ProductPrice</dsv-col><dsv-col>ProductCategory</dsv-col>
  </dsv-table>
  <dsv-table name="Fact Sales" fact style="left:306px;top:233px;width:144px;height:160px">
   <dsv-col key>ProductID</dsv-col><dsv-col key>CustomerID</dsv-col><dsv-col key>SalesmanID</dsv-col><dsv-col key>ChannelID</dsv-col><dsv-col key>TimeID</dsv-col><dsv-col>Qty</dsv-col><dsv-col>Qty Total price</dsv-col>
  </dsv-table>
  <dsv-table name="TimeDim" style="left:564px;top:267px;width:157px;height:92px">
   <dsv-col key>TimeID</dsv-col><dsv-col>CalendarQuarter</dsv-col><dsv-col>CalendarYear</dsv-col>
  </dsv-table>
  <dsv-table name="CustomerDim" style="left:297px;top:507px;width:163px;height:110px">
   <dsv-col key>CustomerID</dsv-col><dsv-col>CustomerName</dsv-col><dsv-col>CustomerPhone</dsv-col>
  </dsv-table>
 </div>
 <div class="v dith">
  <span class="btn"><i style="border-bottom-color:#000;border-top:0"></i></span>
  <span style="height:111px;flex:none"></span>
  <span class="thumb"></span>
  <span class="sp"></span>
  <span class="btn"><i style="border-top-color:#000;border-bottom:0"></i></span>
 </div>
 <div class="h2">
  <span class="btn" style="width:22px"><i style="border-right-color:#000;border-left:0"></i></span>
  <span class="sp"></span>
  <span class="btn"><i style="border-left-color:#000;border-right:0"></i></span>
 </div>
 <div class="corner"><vs-icon n="crosshair" s="20"></vs-icon></div>
</div>`);

class DsvTable extends HTMLElement{
  constructor(){super();this.attachShadow({mode:'open'});}
  connectedCallback(){
    const fact=this.hasAttribute('fact');
    this.shadowRoot.innerHTML=`<style>
    :host{position:absolute;box-sizing:border-box;background:#fff;border:1px solid #5e5e5e;font-family:"Liberation Sans",sans-serif;font-size:12.500px;color:#1a1a1a;display:block}
    .hd{height:21px;box-sizing:border-box;background:${fact?'#f6f675':'#4676dc'};color:${fact?'#1a1a1a':'#fff'};border-bottom:1px solid #666;display:flex;align-items:center;padding-left:3px;gap:5px}
    .rows{padding-top:1px}
    </style><div class="hd"><vs-icon n="tbl" s="15"></vs-icon>${this.getAttribute('name')}</div><div class="rows"><slot></slot></div>`;
  }
}
customElements.define('dsv-table',DsvTable);

class DsvCol extends HTMLElement{
  constructor(){super();this.attachShadow({mode:'open'});}
  connectedCallback(){
    this.shadowRoot.innerHTML=`<style>:host{display:flex;align-items:center;height:16px;padding-left:3px;gap:5px}
    .e{width:15px;flex:none}</style>${this.hasAttribute('key')?'<vs-icon n="key" s="8" w="15" style="margin-top:-2px"></vs-icon>':'<span class="e"></span>'}<slot></slot>`;
  }
}
customElements.define('dsv-col',DsvCol);

// shared pane caption with the three little buttons on the right
class PaneTitle extends HTMLElement{
  constructor(){super();this.attachShadow({mode:'open'});}
  connectedCallback(){
    this.shadowRoot.innerHTML=`<style>
    :host{display:flex;align-items:center;height:29px;padding:0 7px 2px 4px;color:#a3a3a3;font-size:14px;box-sizing:border-box}
    .r{margin-left:auto;display:flex;align-items:center;gap:8px}
    </style><slot></slot><span class="r"><vs-caret></vs-caret><vs-icon n="pin" s="15"></vs-icon><vs-icon n="x" s="14"></vs-icon></span>`;
  }
}
customElements.define('pane-title',PaneTitle);

comp('error-list',`<style>
:host{display:flex;flex-direction:column;box-sizing:border-box;border:1px solid #383838;border-bottom:0;font-size:14px;position:relative;width:1326px}
.bar{display:flex;align-items:center;height:30px;padding-left:8px}
.cb{flex:none;box-sizing:border-box;height:25px;background:#333;border:1px solid #3d3d3d;display:flex;align-items:center;justify-content:space-between;padding:0 5px;color:#e6e6e6}
.f{flex:none;box-sizing:border-box;height:27px;border:1px solid #6b5bd6;background:#2b2b2b;display:flex;align-items:center;padding-left:4px;gap:7px;color:#e0e0e0}
.sep{width:1px;height:24px;background:#3e3e3e;flex:none}
.q{flex:none;box-sizing:border-box;height:26px;background:#333;border:1px solid #444;display:flex;align-items:center;padding:0 5px 0 6px;color:#c8c8c8;margin-left:auto;margin-right:3px}
.q span{margin-right:auto;padding-left:2px}
.cols{display:flex;height:27px;margin-top:3px;border-bottom:1px solid #363636;padding-left:2px;flex:none;color:#bcbcbc}
.cols span{box-sizing:border-box;flex:none;border-right:1px solid #3a3a3a;padding-left:5px;line-height:25px;height:26px}
.sp{flex:1}
.tabs{display:flex;height:24px;border-top:1px solid #3a3a3a;box-sizing:border-box;flex:none}
.tabs .a{width:70px;box-sizing:border-box;background:#1f1f1f;padding-left:4px;margin-top:-1px;border-right:1px solid #3a3a3a;color:#e6e6e6;line-height:24px}
.tabs .b{padding-left:8px;color:#9a9a9a;line-height:23px}
</style>
<pane-title style="height:27px">Error List</pane-title>
<div class="bar">
 <span class="cb" style="width:188px">Entire Solution<vs-caret></vs-caret></span>
 <span class="sep" style="margin:0 6px 0 8px"></span>
 <span class="f" style="width:88px"><vs-icon n="err" s="16"></vs-icon>0 Errors</span>
 <span class="sep" style="margin:0 5px 0 4px"></span>
 <span class="f" style="width:111px"><vs-icon n="warn" s="17"></vs-icon>0 Warnings</span>
 <span class="sep" style="margin:0 5px 0 4px"></span>
 <span class="f" style="width:114px"><vs-icon n="info" s="16"></vs-icon>0 Messages</span>
 <span class="sep" style="margin:0 8px 0 5px"></span>
 <vs-icon n="filter" s="18"></vs-icon>
 <span class="sep" style="margin:0 8px 0 8px"></span>
 <span class="cb" style="width:188px">Build + IntelliSense<vs-caret></vs-caret></span>
 <span class="q" style="width:245px"><span>Search Error List</span><vs-icon n="searchb" s="16"></vs-icon><vs-caret style="margin-left:5px"></vs-caret></span>
</div>
<div class="cols">
 <span style="width:31px"></span><span style="width:28px"></span><span style="width:32px"></span><span style="width:63px">Code</span><span style="width:721px">Description</span><span style="width:187px">Project</span><span style="width:188px">File</span><span style="width:44px">Line</span><span style="width:28px"></span>
</div>
<div class="sp"></div>
<div class="tabs"><span class="a">Error List</span><span class="b">Output</span></div>`);

comp('solution-pane',`<style>
:host{display:flex;flex-direction:column;box-sizing:border-box;border:1px solid #333;border-bottom:0;border-right:0;font-size:14.200px;min-height:0}
.bar{display:flex;align-items:center;height:30px;padding-left:7px;flex:none}
.sep{width:1px;height:24px;background:#3e3e3e;flex:none}
.sel{flex:none;width:27px;height:28px;box-sizing:border-box;border:1px solid #6b5bd6;display:flex;align-items:center;justify-content:center;margin-left:5px}
.q{flex:none;margin:2px 3px 0 2px;box-sizing:border-box;height:28px;background:#333;border:1px solid #3f3f3f;display:flex;align-items:center;padding:0 5px;color:#c8c8c8}
.q span{margin-right:auto}
.tree{flex:1;margin-top:2px}
.tabs{display:flex;height:24px;flex:none;border-top:1px solid #3a3a3a;box-sizing:border-box}
.a{width:128px;box-sizing:border-box;padding-left:6px;margin-top:-1px;line-height:24px;border-right:1px solid #3a3a3a;border-bottom:1px solid #3a3a3a;height:25px;color:#e6e6e6}
.b{padding-left:7px;line-height:23px;color:#9a9a9a}
</style>
<pane-title>Solution Explorer</pane-title>
<div class="bar">
 <vs-icon n="vsproj" s="22"></vs-icon>
 <span class="sep" style="margin:0 11px 0 6px"></span>
 <vs-icon n="history" s="18"></vs-icon><vs-caret style="margin:0 8px 0 8px"></vs-caret>
 <vs-icon n="sync" s="15"></vs-icon>
 <vs-icon n="collapse" s="15" style="margin-left:11px"></vs-icon>
 <vs-icon n="copies" s="18" style="margin-left:12px"></vs-icon>
 <span class="sep" style="margin:0 7px 0 8px"></span>
 <vs-icon n="wrench" s="20"></vs-icon>
 <span class="sel"><vs-icon n="preview" s="18"></vs-icon></span>
</div>
<div class="q"><span>Search Solution Explorer (Ctrl+;)</span><vs-icon n="searchb" s="17"></vs-icon><vs-caret style="margin-left:5px"></vs-caret></div>
<div class="tree">
 <tree-row at="17" big i="solution">Solution 'SSAS_Task22' (1 of 1 project)</tree-row>
 <tree-row at="42" i="project" open sel><b>SSAS_Task22</b></tree-row>
 <tree-row at="64" i="folder" open>Data Sources</tree-row>
 <tree-row at="86" i="db">SalesDS.ds</tree-row>
 <tree-row at="64" i="folder" open>Data Source Views</tree-row>
 <tree-row at="86" i="dsv">Sales.dsv</tree-row>
 <tree-row at="64" i="folder" open>Cubes</tree-row>
 <tree-row at="86" i="cube">Sales.cube</tree-row>
 <tree-row at="64" i="folder" open>Dimensions</tree-row>
 <tree-row at="86" i="dim">Customer Dim.dim</tree-row>
 <tree-row at="86" i="dim">Product Dim.dim</tree-row>
 <tree-row at="86" i="dim">Time Dim.dim</tree-row>
 <tree-row at="64" i="folder">Roles</tree-row>
 <tree-row at="64" i="folder">Assemblies</tree-row>
 <tree-row at="64" i="folder">Miscellaneous</tree-row>
</div>
<div class="tabs"><span class="a">Solution Explorer</span><span class="b">Git Changes</span></div>`);

class TreeRow extends HTMLElement{
  constructor(){super();this.attachShadow({mode:'open'});}
  connectedCallback(){
    const at=+this.getAttribute('at'),open=this.hasAttribute('open'),sel=this.hasAttribute('sel'),big=this.hasAttribute('big');
    this.shadowRoot.innerHTML=`<style>
    :host{display:flex;align-items:center;height:24px;box-sizing:border-box;padding-bottom:2px;padding-left:${at}px;color:#e4e4e4;${sel?'background:#3d3d3d;':''}}
    .ar{width:0;height:0;border-left:8px solid transparent;border-bottom:8px solid #c8c8c8;margin-left:-28px;margin-right:20px;flex:none}
    vs-icon{margin-right:7px}
    ::slotted(b){color:#fff;font-weight:700}
    </style>${open?'<span class="ar"></span>':''}<vs-icon n="${this.getAttribute('i')}" s="${big?20:18}"></vs-icon><slot></slot>`;
  }
}
customElements.define('tree-row',TreeRow);

comp('props-pane',`<style>
:host{display:flex;flex-direction:column;box-sizing:border-box;border:1px solid #333;border-right:0;font-size:14.200px;min-height:0}
.obj{height:28px;background:#3a3a3a;display:flex;align-items:center;padding:0 6px 1px 8px;box-sizing:border-box;gap:8px;flex:none;color:#dcdcdc}
.obj b{color:#fff}
.obj vs-caret{margin-left:auto}
.bar{height:31px;display:flex;align-items:center;padding-left:3px;flex:none}
.sel{width:29px;height:28px;box-sizing:border-box;border:1px solid #6b5bd6;display:flex;align-items:center;justify-content:center;flex:none}
.sep{width:1px;height:26px;background:#3e3e3e;margin:0 7px;flex:none}
.wrap{flex:none;display:grid;grid-template-columns:1fr 18px;margin-top:3px;padding-right:3px;height:203px;overflow:hidden}
.sb{display:flex;flex-direction:column;align-items:center;padding-top:6px;background:#1f1f1f}
.sb i{display:block;width:0;height:0;border:5px solid transparent}
.th{width:11px;height:56px;background:#4d4d4d;margin:51px 0 auto}
.h{flex:1;padding:10px 0 0 8px}
.h b{display:block;color:#f0f0f0;margin-bottom:2px;line-height:20px}
</style>
<pane-title style="height:27px">Properties</pane-title>
<div class="obj"><b>Sales</b>Cube<vs-caret></vs-caret></div>
<div class="bar">
 <span class="sel"><vs-icon n="p_cat" s="20"></vs-icon></span>
 <vs-icon n="p_az" s="21" style="margin-left:5px"></vs-icon>
 <span class="sep"></span>
 <vs-icon n="p_key" s="21"></vs-icon>
</div>
<div class="wrap">
 <div>
  <prop-row k="ProcessingMode" v="Regular"></prop-row>
  <prop-row k="ProcessingPriority" v="0"></prop-row>
  <prop-row k="Source" v="Sales (Data source view)" dim></prop-row>
  <prop-row k="Visible" v="True"></prop-row>
  <prop-cat>Basic</prop-cat>
  <prop-row k="Description" v=""></prop-row>
  <prop-row k="ID" v="Sales" dim></prop-row>
  <prop-row k="Name" v="Sales" sel></prop-row>
  <prop-cat>Configurable</prop-cat>
 </div>
 <div class="sb">
  <i style="border-bottom-color:#8a8a8a;border-top:0"></i>
  <span class="th"></span>
  <i style="border-top-color:#8a8a8a;border-bottom:0;margin-bottom:8px"></i>
 </div>
</div>
<div class="h"><b>Name</b>Specifies the name of the object.</div>`);

class PropRow extends HTMLElement{
  constructor(){super();this.attachShadow({mode:'open'});}
  connectedCallback(){
    const sel=this.hasAttribute('sel'),dim=this.hasAttribute('dim');
    this.shadowRoot.innerHTML=`<style>
    :host{display:grid;grid-template-columns:240px 1fr;height:23px;box-sizing:border-box;border-left:17px solid #2d2d2d;border-bottom:1px solid #2d2d2d;color:${dim?'#a8a8a8':'#e4e4e4'}}
    span{padding-left:5px;line-height:21px;white-space:nowrap}
    .k{border-right:1px solid #2d2d2d;${sel?'background:#2d2d2d;':''}}
    .v{padding-left:3px;${sel?'font-weight:700;color:#fff;':''}}
    </style><span class="k">${this.getAttribute('k')}</span><span class="v">${this.getAttribute('v')}</span>`;
  }
}
customElements.define('prop-row',PropRow);

comp('prop-cat',`<style>
:host{display:flex;align-items:center;height:23px;box-sizing:border-box;padding-bottom:2px;background:#2d2d2d;font-weight:700;color:#f0f0f0}
.m{box-sizing:border-box;width:11px;height:11px;border:1px solid #c8c8c8;margin:0 7px 0 4px;display:flex;align-items:center;justify-content:center}
.m i{display:block;width:7px;height:1px;background:#c8c8c8}
</style><span class="m"><i></i></span><slot></slot>`);

comp('water-mark',`<style>
:host{position:absolute;left:832px;top:852px;width:246px;color:#5c5c5c;text-align:center;display:block;pointer-events:none}
.ar{font:700 82px/84px "DejaVu Sans",sans-serif;direction:rtl;width:290px;margin-left:-18px;white-space:nowrap;transform:scaleX(.79)}
.en{font:700 37.500px/40px "Liberation Sans",sans-serif;margin-top:-4px}
</style><div class="ar">مستقل</div><div class="en">mostaql.com</div>`);
</script>
</body>
</html>
